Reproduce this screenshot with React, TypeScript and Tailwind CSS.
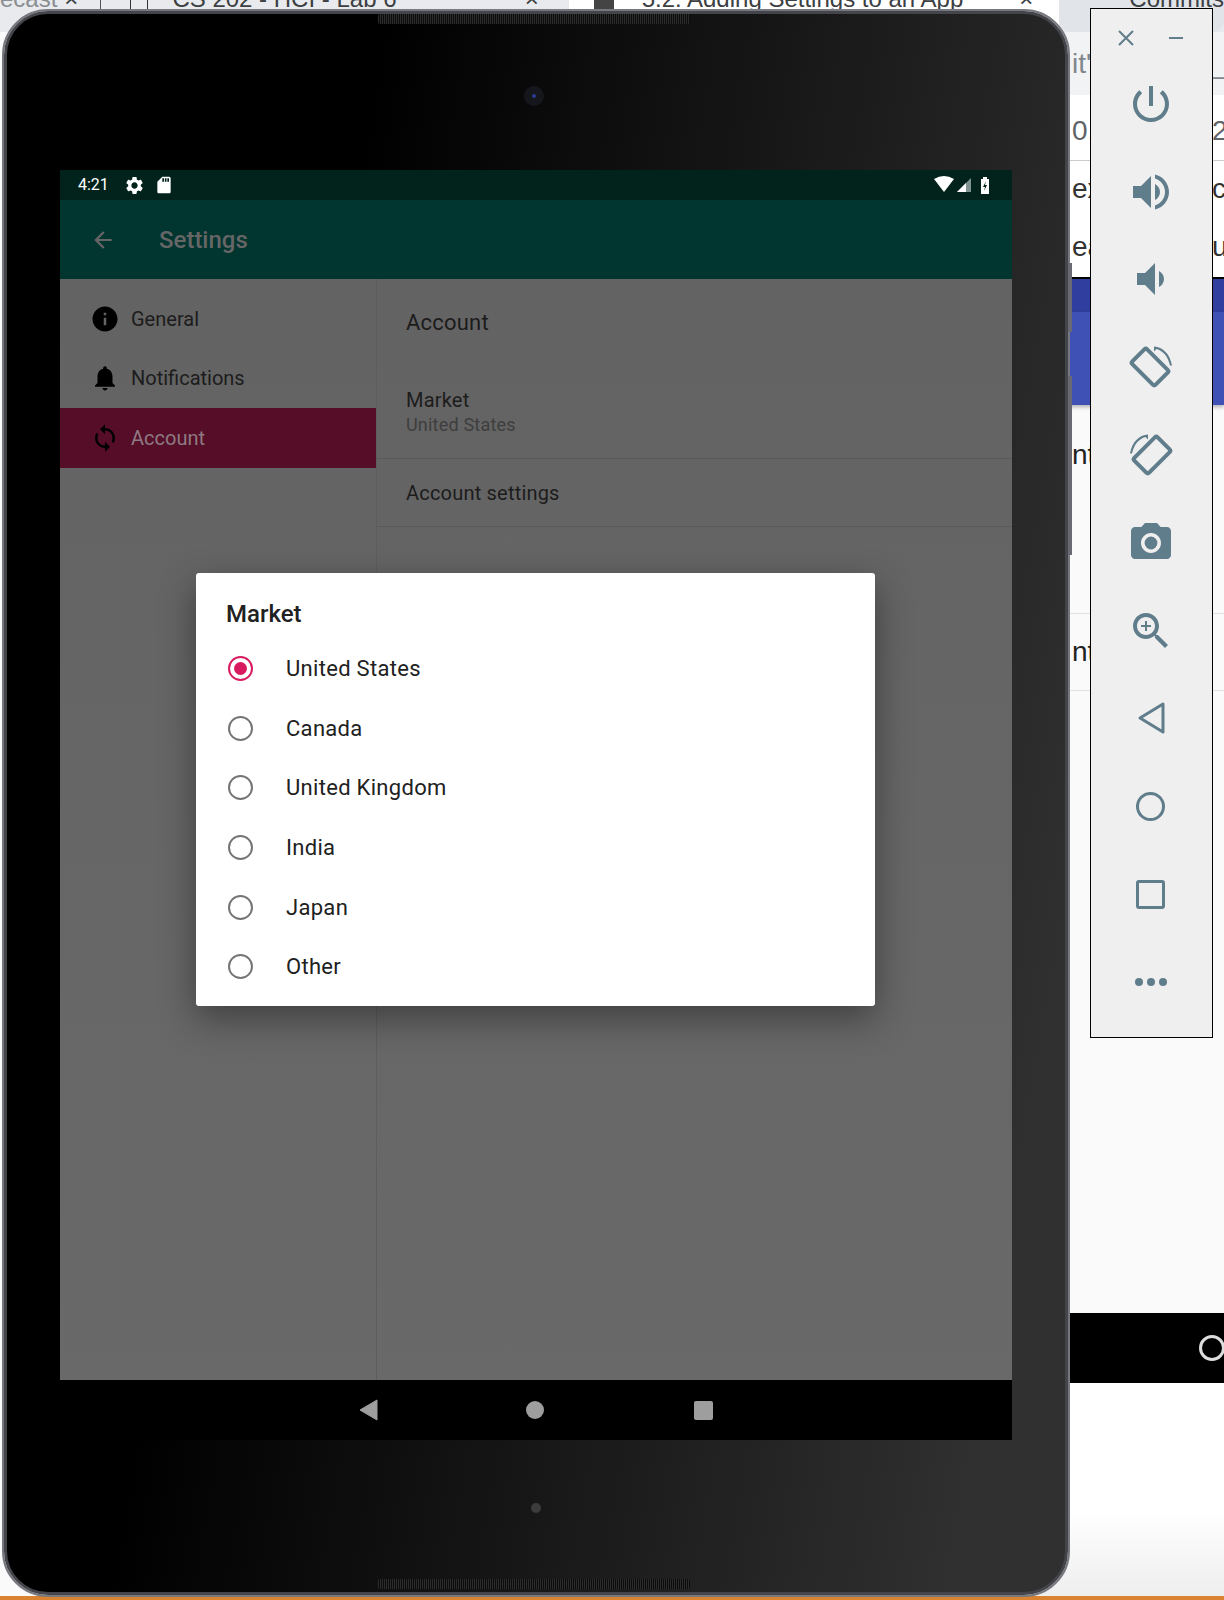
import type { ReactNode } from 'react';

const sans = "font-['Liberation_Sans',sans-serif]";

function Icon({ d, size, className }: { d: string; size: number; className: string }) {
  return (
    <svg width={size} height={size} viewBox="0 0 24 24" className={className}>
      <path d={d} fill="currentColor" />
    </svg>
  );
}

const paths = {
  power: 'M13 3h-2v10h2V3zm4.83 2.17l-1.42 1.42C17.99 7.86 19 9.81 19 12c0 3.87-3.13 7-7 7s-7-3.13-7-7c0-2.19 1.01-4.14 2.58-5.42L6.17 5.17C4.23 6.82 3 9.26 3 12c0 4.97 4.03 9 9 9s9-4.03 9-9c0-2.74-1.23-5.18-3.17-6.83z',
  volUp: 'M3 9v6h4l5 5V4L7 9H3zm13.5 3c0-1.77-1.02-3.29-2.5-4.03v8.05c1.48-.73 2.5-2.25 2.5-4.02zM14 3.23v2.06c2.89.86 5 3.54 5 6.71s-2.11 5.85-5 6.71v2.06c4.01-.91 7-4.49 7-8.77s-2.99-7.86-7-8.77z',
  volDown: 'M18.5 12c0-1.77-1.02-3.29-2.5-4.03v8.05c1.48-.73 2.5-2.25 2.5-4.02zM5 9v6h4l5 5V4L9 9H5z',
  camera: 'M12 15.2a3.2 3.2 0 1 0 0-6.4 3.2 3.2 0 0 0 0 6.4z M9 2L7.17 4H4c-1.1 0-2 .9-2 2v12c0 1.1.9 2 2 2h16c1.1 0 2-.9 2-2V6c0-1.1-.9-2-2-2h-3.17L15 2H9zm3 15c-2.76 0-5-2.24-5-5s2.24-5 5-5 5 2.24 5 5-2.24 5-5 5z',
  zoom: 'M15.5 14h-.79l-.28-.27C15.41 12.59 16 11.11 16 9.5 16 5.91 13.09 3 9.5 3S3 5.91 3 9.5 5.91 16 9.5 16c1.61 0 3.09-.59 4.23-1.57l.27.28v.79l5 4.99L20.49 19l-4.99-5zm-6 0C7.01 14 5 11.99 5 9.5S7.01 5 9.5 5 14 7.01 14 9.5 11.99 14 9.5 14z M12 10h-2v2H9v-2H7V9h2V7h1v2h2v1z',
  info: 'M12 2C6.48 2 2 6.48 2 12s4.48 10 10 10 10-4.48 10-10S17.52 2 12 2zm1 15h-2v-6h2v6zm0-8h-2V7h2v2z',
  bell: 'M12 22c1.1 0 2-.9 2-2h-4c0 1.1.89 2 2 2zm6-6v-5c0-3.07-1.64-5.64-4.5-6.32V4c0-.83-.67-1.5-1.5-1.5s-1.5.67-1.5 1.5v.68C7.63 5.36 6 7.92 6 11v5l-2 2v1h16v-1l-2-2z',
  sync: 'M12 4V1L8 5l4 4V6c3.31 0 6 2.69 6 6 0 1.01-.25 1.97-.7 2.8l1.46 1.46C19.54 15.03 20 13.57 20 12c0-4.42-3.58-8-8-8zm0 14c-3.31 0-6-2.69-6-6 0-1.01.25-1.97.7-2.8L5.24 7.74C4.46 8.97 4 10.43 4 12c0 4.42 3.58 8 8 8v3l4-4-4-4v3z',
  gear: 'M19.14 12.94c.04-.3.06-.61.06-.94 0-.32-.02-.64-.07-.94l2.03-1.58c.18-.14.23-.41.12-.61l-1.92-3.32c-.12-.22-.37-.29-.59-.22l-2.39.96c-.5-.38-1.03-.7-1.62-.94l-.36-2.54c-.04-.24-.24-.41-.48-.41h-3.84c-.24 0-.43.17-.47.41l-.36 2.54c-.59.24-1.13.57-1.62.94l-2.39-.96c-.22-.08-.47 0-.59.22L2.74 8.87c-.12.21-.08.47.12.61l2.03 1.58c-.05.3-.09.63-.09.94s.02.64.07.94l-2.03 1.58c-.18.14-.23.41-.12.61l1.92 3.32c.12.22.37.29.59.22l2.39-.96c.5.38 1.03.7 1.62.94l.36 2.54c.05.24.24.41.48.41h3.84c.24 0 .44-.17.47-.41l.36-2.54c.59-.24 1.13-.56 1.62-.94l2.39.96c.22.08.47 0 .59-.22l1.92-3.32c.12-.22.07-.47-.12-.61l-2.01-1.58zM12 15.6c-1.98 0-3.6-1.62-3.6-3.6s1.62-3.6 3.6-3.6 3.6 1.62 3.6 3.6-1.62 3.6-3.6 3.6z',
  sd: 'M18 2h-8L4.02 8 4 20c0 1.1.9 2 2 2h12c1.1 0 2-.9 2-2V4c0-1.1-.9-2-2-2zm-6 6h-2V4h2v4zm3 0h-2V4h2v4zm3 0h-2V4h2v4z',
};

function RotateIcon({ flip }: { flip?: boolean }) {
  return (
    <svg width="48" height="48" viewBox="0 0 48 48" className={flip ? 'text-[#607d8b] -scale-x-100' : 'text-[#607d8b]'}>
      <rect x="12.5" y="7.5" width="21" height="33" rx="2" transform="rotate(-45 23 24)" fill="none" stroke="currentColor" strokeWidth="4" />
      <path d="M27 3.5 C36 4 43 11 45 22.5 L43 22.5 C41 13 35.5 7.5 29.5 6 L27 8.5 Z" fill="currentColor" />
    </svg>
  );
}

function BgRow({ left, right, className }: { left?: string; right?: string; className: string }) {
  return (
    <div className={`flex items-center justify-between pl-[1012px] text-[28px] overflow-hidden ${sans} ${className}`}>
      <span>{left}</span>
      <span className="w-[12px] whitespace-nowrap">{right}</span>
    </div>
  );
}

function Browser() {
  return (
    <div className={`flex flex-col h-full ${sans}`}>
      <div className="h-[32px] flex bg-[#e8eaed] text-[24px] leading-[20px] text-[#3c4043] overflow-hidden">
        <div className="w-[103px] flex justify-between pr-[22px] -mt-[11px] border-r border-[#555]">
          <span className="text-[#8a8d91]">ecast</span>
          <span>×</span>
        </div>
        <div className="w-[30px] border-r border-[#333]" />
        <div className="w-[18px] border-r border-[#333]" />
        <div className="w-[428px] flex justify-between pl-[24px] pr-[30px] -mt-[11px]">
          <span>CS 202 - HCI - Lab 6</span>
          <span>×</span>
        </div>
        <div className="w-[500px] flex bg-white pl-[25px] -mt-[11px] pr-[26px]">
          <span className="w-[20px] h-[20px] bg-[#444] mr-[28px]" />
          <span className="flex-1 whitespace-nowrap overflow-hidden">5.2: Adding Settings to an App</span>
          <span>×</span>
        </div>
        <div className="flex-1 rounded-b-[12px] bg-[#e1e4e8] pl-[36px] -mt-[11px] pr-0">
          <span className="ml-[34px]">Commits</span>
        </div>
      </div>
      <div className="flex flex-1">
        <div className="w-[60px] flex flex-col">
          <div className="flex-1 bg-[#e4e5e7]" />
          <div className="h-[51px] bg-[#62ab5c]" />
        </div>
        <div className="flex-1 flex flex-col bg-[#fafafa] -ml-[60px] pl-[60px] min-w-0">
          <BgRow left="it'" right="_p" className="h-[63px] bg-[#f1f3f4] text-[#80868b]" />
          <BgRow left="0.." right="2" className="h-[65px] bg-white text-[#5f6368] pt-[6px]" />
          <BgRow left="ex" right="ce" className="h-[57px] bg-white text-[#333] border-t border-[#ccc]" />
          <BgRow left="ea" right="u" className="h-[60px] bg-white text-[#333]" />
          <div className="h-[2px] bg-black shrink-0" />
          <div className="h-[33px] bg-[#303f9f] shrink-0" />
          <div className="h-[93px] bg-[#3f51b5] shadow-[0_2px_4px_rgba(0,0,0,0.3)] shrink-0" />
          <BgRow left="nt" className="h-[100px] text-[#222]" />
          <div className="h-[108px]" />
          <div className="h-[1px] bg-[#e2e2e2]" />
          <BgRow left="nt" className="h-[77px] text-[#222] border-b border-[#e2e2e2]" />
          <div className="h-[622px]" />
          <div className="h-[70px] bg-black flex items-center justify-end pr-0 overflow-hidden">
            <span className="w-[26px] h-[26px] rounded-full border-[3px] border-[#ddd] -mr-[13px] mr-[-1px]" />
          </div>
          <div className="flex-1 bg-[linear-gradient(#fff_60%,#eee)]" />
        </div>
      </div>
      <div className="h-[4px] bg-[#d9822f]" />
    </div>
  );
}

function SideItem({ icon, label, active }: { icon: string; label: string; active?: boolean }) {
  return (
    <div className={`h-[59.6px] flex items-center pl-[30px] gap-[11px] text-[20px] ${active ? 'bg-[#560d28] text-[#8e7a82]' : 'text-[#1c1c1c]'}`}>
      <Icon d={icon} size={30} className="text-black" />
      <span>{label}</span>
    </div>
  );
}

function Radio({ label, checked }: { label: string; checked?: boolean }) {
  return (
    <div className="h-[59.6px] flex items-center pl-[32px] gap-[33px]">
      <span className={`w-[25px] h-[25px] rounded-full border-[2.5px] flex items-center justify-center ${checked ? 'border-[#d81b60]' : 'border-[#757575]'}`}>
        {checked && <span className="w-[13px] h-[13px] rounded-full bg-[#d81b60]" />}
      </span>
      <span className="text-[22px] tracking-[0.3px] text-[#212121]">{label}</span>
    </div>
  );
}

function Screen() {
  return (
    <div className="relative ml-[53px] mt-[156px] w-[952px] h-[1270px] flex flex-col font-[Roboto]">
      <div className="h-[30px] bg-[#02231c] flex items-center pl-[18px] pr-[18px] text-white">
        <span className="text-[16px] w-[46px]">4:21</span>
        <Icon d={paths.gear} size={21} className="text-white" />
        <Icon d={paths.sd} size={20} className="ml-[9px] text-white" />
        <svg width="60" height="18" viewBox="0 0 60 18" className="ml-auto">
          <path d="M0 3 Q10 -3 20 3 L10 16 Z" fill="#fff" />
          <path d="M23 16 L37 2 L37 16 Z" fill="#7f9490" />
          <path d="M23 16 L32 7 L32 16 Z" fill="#fff" />
          <path d="M47 3 h2 v-2 h4 v2 h2 v15 h-8 z" fill="#fff" />
          <path d="M52 5 L49 11 H51 L50 15 L53 9 H51 Z" fill="#02231c" />
        </svg>
      </div>
      <div className="h-[79px] bg-[#013530] flex items-center pl-[30px]">
        <svg width="26" height="26" viewBox="0 0 24 24" className="text-[#666]">
          <path fill="currentColor" d="M20 11H7.83l5.59-5.59L12 4l-8 8 8 8 1.41-1.41L7.83 13H20v-2z" />
        </svg>
        <span className="ml-[43px] text-[24px] font-medium text-[#666]">Settings</span>
      </div>
      <div className="flex flex-1 bg-[linear-gradient(#636363,#696969)]">
        <div className="w-[317px] pt-[10px] border-r border-[#5d5d5d]">
          <SideItem icon={paths.info} label="General" />
          <SideItem icon={paths.bell} label="Notifications" />
          <SideItem icon={paths.sync} label="Account" active />
        </div>
        <div className="flex-1 text-[#1c1c1c] tracking-[0.2px]">
          <div className="h-[86px] pl-[29px] flex items-center text-[22px]">Account</div>
          <div className="h-[94px] pl-[29px] border-b border-[#595959] pt-[22px]">
            <div className="text-[20px] leading-[26px]">Market</div>
            <div className="text-[18px] leading-[24px] text-[#3e3e3e]">United States</div>
          </div>
          <div className="h-[68px] pl-[29px] flex items-center text-[20px] border-b border-[#595959]">Account settings</div>
        </div>
      </div>
      <div className="h-[60px] bg-black flex items-center justify-center pr-[1px]">
        <svg width="20" height="22" viewBox="0 0 20 22"><path d="M18 1 V21 L1 11 Z" fill="#9e9e9e" stroke="#9e9e9e" strokeLinejoin="round" /></svg>
        <span className="ml-[147px] w-[18px] h-[18px] rounded-full bg-[#9e9e9e]" />
        <span className="ml-[150px] w-[19px] h-[19px] rounded-[2px] bg-[#9e9e9e]" />
      </div>

      {/* dialog sits on top of the dimmed settings page */}
      <div className="absolute left-[136px] top-[403px] w-[679px] h-[433px] rounded-[3px] bg-white shadow-[0_12px_36px_rgba(0,0,0,0.4)]">
        <div className="h-[66px] pt-[16px] pl-[30px] flex items-center text-[24px] font-medium text-[#212121]">Market</div>
        <Radio label="United States" checked />
        <Radio label="Canada" />
        <Radio label="United Kingdom" />
        <Radio label="India" />
        <Radio label="Japan" />
        <Radio label="Other" />
      </div>
    </div>
  );
}

function Device() {
  const grill = 'absolute left-[371px] w-[312px] h-[10px] rounded-[2px] bg-[repeating-linear-gradient(90deg,#2c2c2c_0,#2c2c2c_1px,#0c0c0c_1px,#0c0c0c_2px)]';
  return (
    <div className="absolute left-[2px] top-[9px] w-[1068px] h-[1588px] rounded-[46px] border-2 border-[#77787f]">
      <div className="relative h-full rounded-[44px] border-[3px] border-[#44454b] bg-[linear-gradient(100deg,#000_28%,#303030_92%)] overflow-hidden">
        <div className={`${grill} top-[0px]`} />
        <div className="absolute left-[517px] top-[72px] w-[20px] h-[20px] rounded-full bg-[#15171d] flex items-center justify-center">
          <span className="w-[4px] h-[4px] rounded-full bg-[#2b3a8f]" />
        </div>
        <div className="absolute left-[524px] top-[1489px] w-[10px] h-[10px] rounded-full bg-[#3c3c3c]" />
        <div className={`${grill} bottom-[3px]`} />
        <Screen />
      </div>
    </div>
  );
}

function PanelRow({ children }: { children: ReactNode }) {
  return <div className="h-[87.8px] flex items-center justify-center">{children}</div>;
}

function ControlPanel() {
  const c = 'text-[#607d8b]';
  return (
    <div className="absolute left-[1090px] top-[8px] w-[123px] h-[1030px] border border-black bg-[#efefef] pr-[2px]">
      <div className="h-[51px] pt-[7px] flex items-center justify-center gap-[26px]">
        <svg width="24" height="24" viewBox="0 0 24 24"><path d="M5 5 L19 19 M19 5 L5 19" stroke="#607d8b" strokeWidth="2" /></svg>
        <svg width="24" height="24" viewBox="0 0 24 24"><path d="M5 12 H19" stroke="#607d8b" strokeWidth="2" /></svg>
      </div>
      <PanelRow><Icon d={paths.power} size={48} className={c} /></PanelRow>
      <PanelRow><Icon d={paths.volUp} size={48} className={c} /></PanelRow>
      <PanelRow><Icon d={paths.volDown} size={48} className={c} /></PanelRow>
      <PanelRow><RotateIcon /></PanelRow>
      <PanelRow><RotateIcon flip /></PanelRow>
      <PanelRow><Icon d={paths.camera} size={48} className={c} /></PanelRow>
      <PanelRow><Icon d={paths.zoom} size={48} className={c} /></PanelRow>
      <PanelRow>
        <svg width="48" height="48" viewBox="0 0 48 48"><path d="M36 10 V38 L13 24 Z" fill="none" stroke="#607d8b" strokeWidth="3" strokeLinejoin="round" /></svg>
      </PanelRow>
      <PanelRow><span className="w-[29px] h-[29px] rounded-full border-[3px] border-[#607d8b]" /></PanelRow>
      <PanelRow><span className="w-[29px] h-[29px] rounded-[3px] border-[3px] border-[#607d8b]" /></PanelRow>
      <PanelRow>
        <div className="flex gap-[4px]">
          <span className="w-[8px] h-[8px] rounded-full bg-[#607d8b]" />
          <span className="w-[8px] h-[8px] rounded-full bg-[#607d8b]" />
          <span className="w-[8px] h-[8px] rounded-full bg-[#607d8b]" />
        </div>
      </PanelRow>
    </div>
  );
}

export default function App() {
  return (
    <div className="relative w-[1224px] h-[1600px] overflow-hidden bg-white">
      <Browser />
      <Device />
      {/* volume and power keys on the device edge */}
      <div className="absolute left-[1068px] top-[263px] w-[4px] h-[69px] bg-[#686972]" />
      <div className="absolute left-[1068px] top-[376px] w-[4px] h-[179px] bg-[#686972]" />
      <ControlPanel />
    </div>
  );
}
